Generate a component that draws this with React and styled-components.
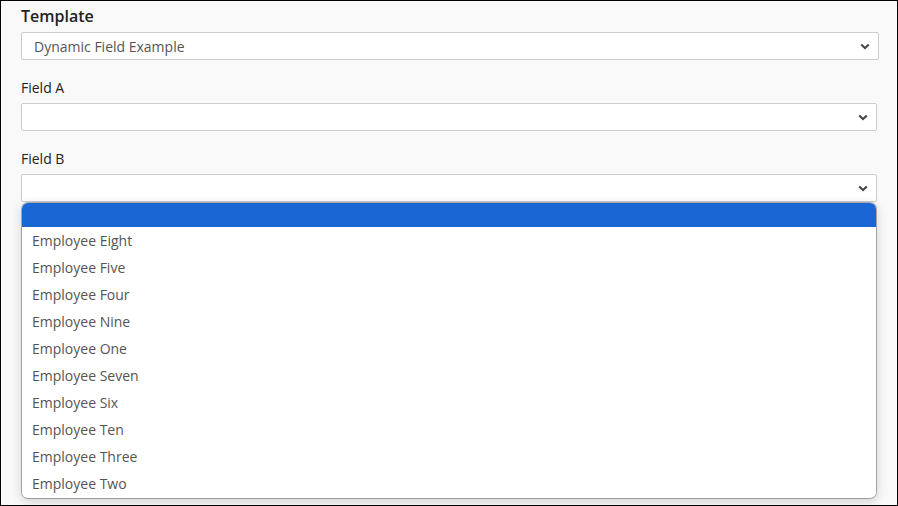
import React from "react";
import styled, { createGlobalStyle } from "styled-components";

const Global = createGlobalStyle`
  html, body {
    margin: 0;
    padding: 0;
  }
  body {
    font-family: "Open Sans", "Noto Sans", sans-serif;
    background: #f9f9f9;
  }
`;

const Frame = styled.div`
  position: relative;
  box-sizing: border-box;
  width: 898px;
  height: 506px;
  border: 1px solid #000;
  background: #f9f9f9;
  padding: 3px 0 0 20px;
  overflow: hidden;
`;

const Field = styled.div`
  display: flex;
  flex-direction: column;
  width: ${(p) => p.$width}px;
  margin-bottom: ${(p) => p.$gap || 0}px;
`;

const Label = styled.div`
  font-size: ${(p) => (p.$strong ? 16 : 14)}px;
  font-weight: ${(p) => (p.$strong ? 600 : 400)};
  color: #222;
  line-height: 24px;
  height: 24px;
  margin-bottom: ${(p) => (p.$strong ? 4 : 3)}px;
`;

const SelectBox = styled.div`
  box-sizing: border-box;
  height: 28px;
  background: #fff;
  border: 1px solid #ccc;
  border-radius: 2px;
  display: flex;
  align-items: center;
  justify-content: space-between;
  padding: 0 8px 0 12px;
  font-size: 14px;
  color: #555;
`;

const Chevron = () => (
  <svg width="10" height="7" viewBox="0 0 10 7">
    <path d="M1.2 1.4 L5 5 L8.8 1.4" fill="none" stroke="#444" strokeWidth="2" />
  </svg>
);

const Menu = styled.ul`
  position: absolute;
  left: 21px;
  top: 202px;
  width: 854px;
  margin: 0;
  padding: 0 0 1px;
  list-style: none;
  background: #fff;
  border-radius: 6px;
  overflow: hidden;
  box-shadow: 0 0 0 1px rgba(0, 0, 0, 0.28), 0 3px 12px rgba(0, 0, 0, 0.18);
`;

const Option = styled.li`
  height: ${(p) => (p.$selected ? 24 : 27)}px;
  line-height: 27px;
  padding-left: 10px;
  font-size: 14px;
  color: #555;
  background: ${(p) => (p.$selected ? "#1a66d4" : "#fff")};
`;

const employees = [
  "Employee Eight",
  "Employee Five",
  "Employee Four",
  "Employee Nine",
  "Employee One",
  "Employee Seven",
  "Employee Six",
  "Employee Ten",
  "Employee Three",
  "Employee Two",
];

const App = () => {
  return (
    <Frame>
      <Global />
      <Field $width={858} $gap={16}>
        <Label $strong>Template</Label>
        <SelectBox>
          <span>Dynamic Field Example</span>
          <Chevron />
        </SelectBox>
      </Field>
      <Field $width={856} $gap={16}>
        <Label>Field A</Label>
        <SelectBox>
          <span />
          <Chevron />
        </SelectBox>
      </Field>
      <Field $width={856}>
        <Label>Field B</Label>
        <SelectBox>
          <span />
          <Chevron />
        </SelectBox>
      </Field>
      <Menu>
        <Option $selected />
        {employees.map((name) => (
          <Option key={name}>{name}</Option>
        ))}
      </Menu>
    </Frame>
  );
};

export default App;
